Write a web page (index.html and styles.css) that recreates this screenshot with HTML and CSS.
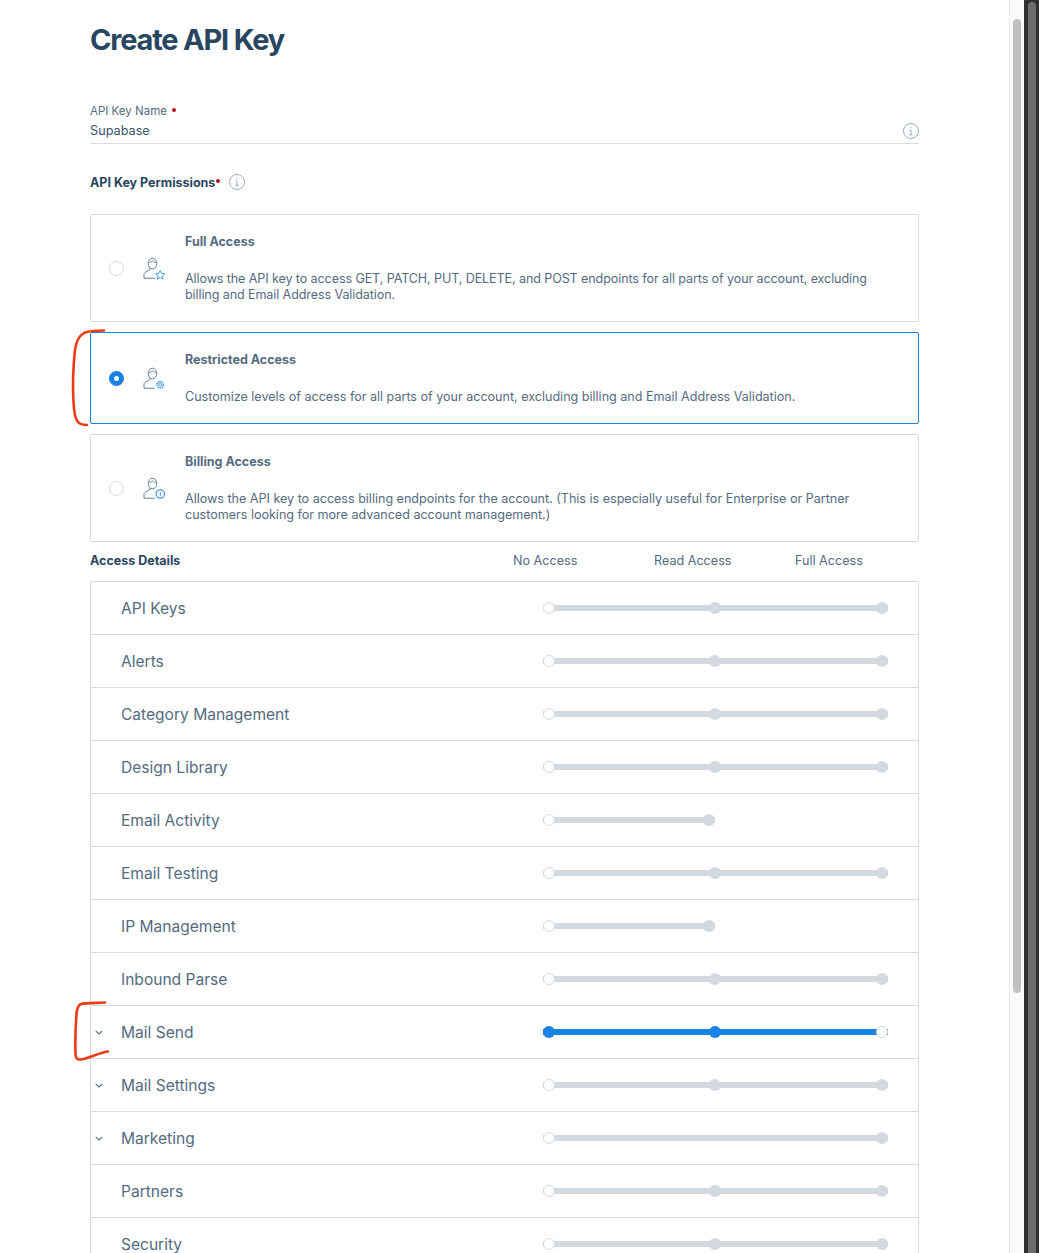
FILE: index.html
```html
<!DOCTYPE html>
<html lang="en">
<head>
<meta charset="utf-8">
<title>Create API Key</title>
<link rel="stylesheet" href="styles.css">
</head>
<body>
<div class="window">
  <main class="page">
    <h1 class="title">Create API Key</h1>

    <div class="field-label">API Key Name<span class="req req-label"></span></div>
    <div class="field-input">
      <span>Supabase</span>
      <svg class="info" viewBox="0 0 16 16"><circle cx="8" cy="8" r="7.5"/><path d="M8 4.200v1.200M6.600 7.200H8v4.600M6.200 11.800h3.600"/></svg>
    </div>

    <div class="perm-head">
      <span>API Key Permissions</span><span class="req req-perm"></span>
      <svg class="info info-perm" viewBox="0 0 16 16"><circle cx="8" cy="8" r="7.5"/><path d="M8 4.200v1.200M6.600 7.200H8v4.600M6.200 11.800h3.600"/></svg>
    </div>

    <div class="cards">
      <section class="card">
        <span class="radio"></span>
        <svg class="role" viewBox="0 0 24 24">
          <g class="person"><ellipse cx="9.500" cy="6.500" rx="4.300" ry="5.300"/><path d="M5.300 5.500c1.800 0 3.200-.5 4.200-1.700 1 1.200 2.400 1.700 4.200 1.700M6.800 11v1.600L2 15.500C1.200 16 1 16.800 1 17.800v3.400h11.500"/></g>
          <path class="badge" d="M17.200 13.500l1.300 3 3.300.3-2.500 2.200.8 3.200-2.900-1.700-2.900 1.700.8-3.200-2.500-2.200 3.300-.3z"/>
        </svg>
        <div class="card-body">
          <h2 class="card-title">Full Access</h2>
          <p class="card-text card-text-tight">Allows the API key to access GET, PATCH, PUT, DELETE, and POST endpoints for all parts of your account, excluding billing and Email Address Validation.</p>
        </div>
      </section>

      <section class="card card-active">
        <span class="radio radio-on"></span>
        <svg class="role" viewBox="0 0 24 24">
          <g class="person"><ellipse cx="9.500" cy="6.500" rx="4.300" ry="5.300"/><path d="M5.300 5.500c1.800 0 3.200-.5 4.200-1.700 1 1.200 2.400 1.700 4.200 1.700M6.800 11v1.600L2 15.500C1.200 16 1 16.800 1 17.800v3.400h10.500"/></g>
          <circle class="badge-gear" cx="17.200" cy="17.800" r="3.200"/>
          <circle class="badge" cx="17.200" cy="17.800" r="1.300"/>
        </svg>
        <div class="card-body">
          <h2 class="card-title">Restricted Access</h2>
          <p class="card-text">Customize levels of access for all parts of your account, excluding billing and Email Address Validation.</p>
        </div>
      </section>

      <section class="card">
        <span class="radio"></span>
        <svg class="role" viewBox="0 0 24 24">
          <g class="person"><ellipse cx="9.500" cy="6.500" rx="4.300" ry="5.300"/><path d="M5.300 5.500c1.800 0 3.200-.5 4.200-1.700 1 1.200 2.400 1.700 4.200 1.700M6.800 11v1.600L2 15.500C1.200 16 1 16.800 1 17.800v3.400h10.500"/></g>
          <circle class="badge badge-coin" cx="17.300" cy="17" r="4.200"/>
          <path class="badge" d="M17.300 14.800v4.400"/>
        </svg>
        <div class="card-body">
          <h2 class="card-title">Billing Access</h2>
          <p class="card-text">Allows the API key to access billing endpoints for the account. (This is especially useful for Enterprise or Partner customers looking for more advanced account management.)</p>
        </div>
      </section>
    </div>

    <div class="details-head">
      <strong>Access Details</strong>
      <span>No Access</span>
      <span>Read Access</span>
      <span>Full Access</span>
    </div>

    <div class="table">
      <div class="row"><span class="chev-cell"></span><span class="name">API Keys</span><div class="slider"><i class="dot dot-off"></i><i class="dot"></i><i class="dot"></i></div></div>
      <div class="row"><span class="chev-cell"></span><span class="name">Alerts</span><div class="slider"><i class="dot dot-off"></i><i class="dot"></i><i class="dot"></i></div></div>
      <div class="row"><span class="chev-cell"></span><span class="name">Category Management</span><div class="slider"><i class="dot dot-off"></i><i class="dot"></i><i class="dot"></i></div></div>
      <div class="row"><span class="chev-cell"></span><span class="name">Design Library</span><div class="slider"><i class="dot dot-off"></i><i class="dot"></i><i class="dot"></i></div></div>
      <div class="row"><span class="chev-cell"></span><span class="name">Email Activity</span><div class="slider slider-short"><i class="dot dot-off"></i><i class="dot"></i></div></div>
      <div class="row"><span class="chev-cell"></span><span class="name">Email Testing</span><div class="slider"><i class="dot dot-off"></i><i class="dot"></i><i class="dot"></i></div></div>
      <div class="row"><span class="chev-cell"></span><span class="name">IP Management</span><div class="slider slider-short"><i class="dot dot-off"></i><i class="dot"></i></div></div>
      <div class="row"><span class="chev-cell"></span><span class="name">Inbound Parse</span><div class="slider"><i class="dot dot-off"></i><i class="dot"></i><i class="dot"></i></div></div>
      <div class="row"><span class="chev-cell"><svg class="chev" viewBox="0 0 8 5"><path d="M.7.8 4 4l3.300-3.200"/></svg></span><span class="name">Mail Send</span><div class="slider slider-on"><i class="dot dot-on"></i><i class="dot dot-on"></i><i class="dot dot-off"></i></div></div>
      <div class="row"><span class="chev-cell"><svg class="chev" viewBox="0 0 8 5"><path d="M.7.8 4 4l3.300-3.200"/></svg></span><span class="name">Mail Settings</span><div class="slider"><i class="dot dot-off"></i><i class="dot"></i><i class="dot"></i></div></div>
      <div class="row"><span class="chev-cell"><svg class="chev" viewBox="0 0 8 5"><path d="M.7.8 4 4l3.300-3.200"/></svg></span><span class="name">Marketing</span><div class="slider"><i class="dot dot-off"></i><i class="dot"></i></div></div>
      <div class="row"><span class="chev-cell"></span><span class="name">Partners</span><div class="slider"><i class="dot dot-off"></i><i class="dot"></i><i class="dot"></i></div></div>
      <div class="row"><span class="chev-cell"></span><span class="name">Security</span><div class="slider"><i class="dot dot-off"></i><i class="dot"></i><i class="dot"></i></div></div>
    </div>
  </main>

  <div class="scroll-inner"><div class="scroll-inner-thumb"></div></div>
  <div class="scroll-outer"><div class="scroll-outer-thumb"></div></div>

  <svg class="scribble" viewBox="0 0 1039 1253">
    <path d="M104 330.500C96 330.500 88 331 84 333 79 336 76 342 75 350 73 368 72.500 385 73.500 402 74 412 75 419 78 422 80 424.500 83 425 87 425"/>
    <path d="M105 1002.500C95 1003 85 1003 81 1004 78 1005 77 1008 76.500 1014 75.500 1028 75 1042 75.500 1054 75.500 1058 77 1060 81 1059.500 90 1058 98 1053 108 1051.500"/>
  </svg>
</div>
</body>
</html>
```
FILE: styles.css
```css
* { box-sizing: border-box; }
html, body { margin: 0; padding: 0; height: 1253px; overflow: hidden; background: #fff; }
body { font-family: Inter, "Noto Sans", "Liberation Sans", sans-serif; color: #546b81; }

.window { position: relative; display: flex; width: 1039px; height: 1253px; overflow: hidden; }
.page { flex: 0 0 1009px; width: 1009px; padding: 22px 90px 0; overflow: hidden; }

.title { margin: 0; font-size: 29px; line-height: 36px; font-weight: 700; color: #294661; letter-spacing: -1.2px; }

.field-label { margin-top: 46px; font-size: 11.500px; line-height: 14px; color: #546b81; display: flex; align-items: center; }
.req { display: inline-block; width: 4px; height: 4px; border-radius: 50%; background: #b5121b; }
.req-label { margin-left: 5px; margin-top: -3px; }
.field-input { margin-top: 5px; padding-bottom: 5px; height: 21px; border-bottom: 1px solid #d4dadf; display: flex; justify-content: space-between; font-size: 12.700px; line-height: 16px; color: #3a5570; }
.info { width: 16px; height: 16px; fill: none; stroke: #9eadbc; stroke-width: 1; flex: none; }

.perm-head { margin-top: 30px; margin-bottom: 24px; height: 16px; padding-top: 2px; display: flex; align-items: center; font-size: 12.500px; line-height: 14px; font-weight: 700; color: #294661; }
.req-perm { margin-left: 1px; margin-top: -5px; }
.info-perm { margin: -3px 0 0 9px; }

.cards { display: flex; flex-direction: column; gap: 10px; }
.card { display: flex; align-items: center; border: 1px solid #d4dadf; border-radius: 2px; padding: 19px 40px 18px 18px; }
.card-active { border-color: #1a82e2; }
.radio { flex: none; width: 15px; height: 15px; margin-top: -1px; border-radius: 50%; border: 1px solid #d4dadf; background: #fff; }
.radio-on { border: 5px solid #1a82e2; }
.role { flex: none; width: 24px; height: 24px; margin: 0 18px 0 19px; fill: none; }
.person { stroke: #6a7f93; stroke-width: 1; }
.badge { stroke: #4a9eea; stroke-width: 1; fill: none; }
.badge-coin { stroke-width: 1.300; }
.badge-gear { stroke: #4a9eea; stroke-width: 1.600; stroke-dasharray: 1.500 .6; fill: none; }
.card-body { flex: 1; min-width: 0; }
.card-title { margin: 1px 0 22px; font-size: 12.500px; line-height: 14px; font-weight: 700; color: #546b81; }
.card-text { margin: 0; font-size: 12.550px; line-height: 16px; color: #546b81; }
.card-text-tight { letter-spacing: -0.095px; }

.details-head { margin-top: 12px; margin-bottom: 13px; display: grid; grid-template-columns: 423px 141px 141px 1fr; font-size: 12.600px; line-height: 14px; color: #546b81; }
.details-head strong { font-size: 12.500px; font-weight: 700; color: #294661; }

.table { border: 1px solid #d4dadf; border-bottom: 0; }
.row { height: 53px; display: grid; grid-template-columns: 30px 1fr 345px; align-items: center; padding-right: 30px; border-bottom: 1px solid #d4dadf; }
.chev-cell { display: flex; align-items: center; height: 100%; padding-left: 4px; }
.chev { width: 8px; height: 5px; fill: none; stroke: #546b81; stroke-width: 1.100; }
.name { font-size: 15.550px; line-height: 20px; padding-top: 2px; color: #546b81; }

.slider { display: flex; justify-content: space-between; align-items: center; height: 12px; background: linear-gradient(#d4d9df, #d4d9df) center / 100% 6px no-repeat; }
.slider-short { width: 172px; }
.slider-on { background-image: linear-gradient(#1a82e2, #1a82e2); }
.dot { display: block; width: 12px; height: 12px; border-radius: 50%; background: #d4d9df; }
.dot:nth-child(2):not(:last-child) { margin-right: 1px; }
.dot-off { background: #fff; border: 1px solid #d4d9df; }
.dot-on { background: #1a82e2; }

.scroll-inner { flex: 0 0 15px; height: 100%; background: #fafafa; border-left: 1px solid #e8e8e8; padding: 19px 3px 0; }
.scroll-inner-thumb { width: 8px; height: 974px; border-radius: 4px; background: #c1c1c1; }
.scroll-outer { flex: 0 0 15px; height: 100%; background: #2f2f2f; padding: 2px 3px 0 4px; }
.scroll-outer-thumb { width: 8px; height: 100%; border-radius: 4px 4px 0 0; background: #6e6e6e; }

.scribble { position: absolute; left: 0; top: 0; width: 1039px; height: 1253px; fill: none; stroke: #ee3a16; stroke-width: 2.600; stroke-linecap: round; pointer-events: none; }
```
